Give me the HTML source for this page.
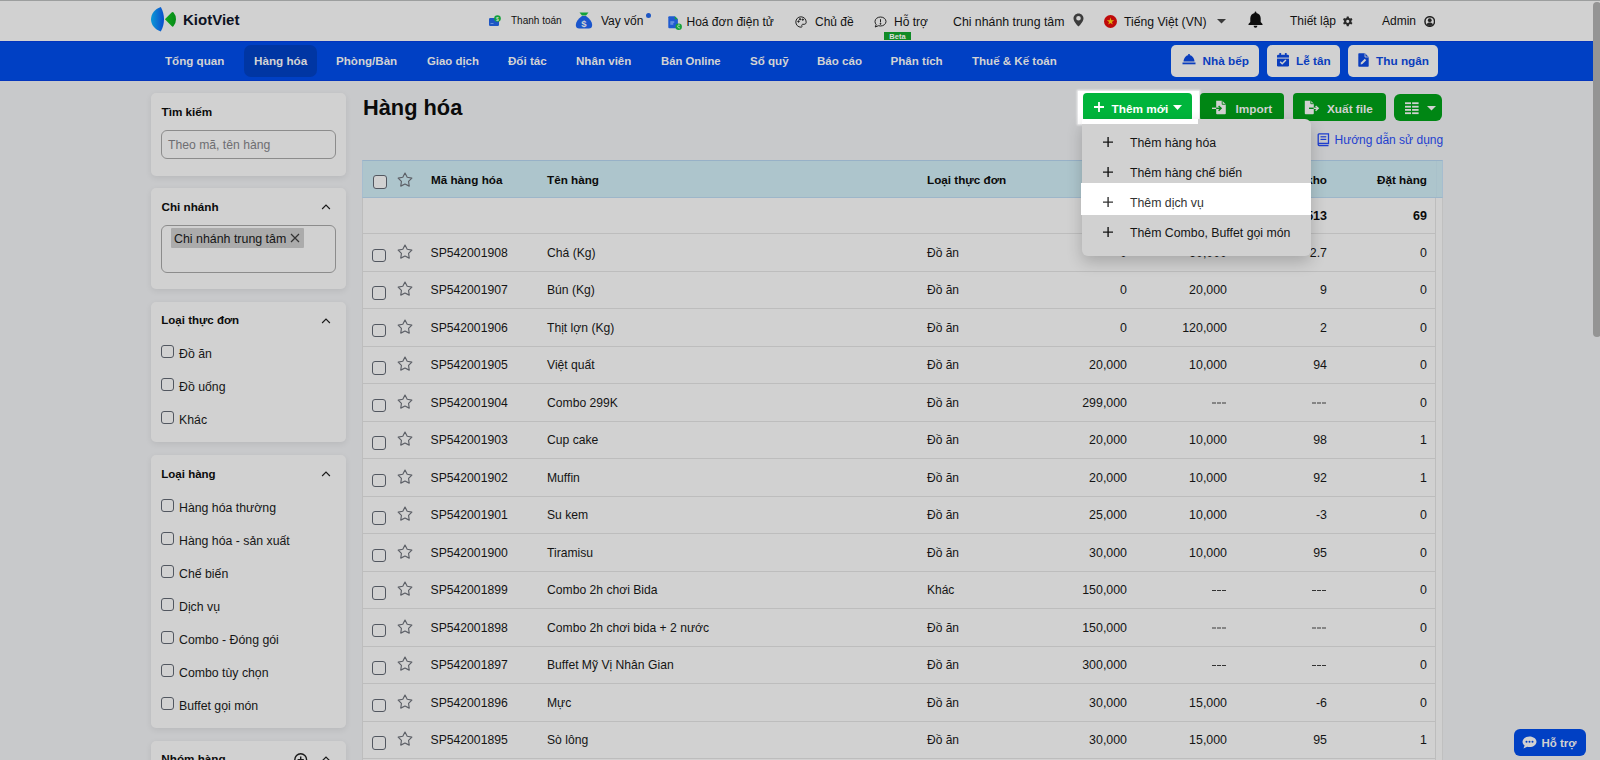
<!DOCTYPE html>
<html><head><meta charset="utf-8"><title>KiotViet - Hàng hóa</title>
<style>
html,body{margin:0;padding:0;width:1600px;height:760px;overflow:hidden;background:#c8c9cb;font-family:"Liberation Sans", sans-serif;}
.t{position:absolute;white-space:nowrap;line-height:1;font-family:"Liberation Sans", sans-serif;}
svg{display:block}
</style></head><body>
<div style="position:absolute;left:0px;top:0px;width:1600px;height:41px;background:#d1d1d1;"></div>
<div style="position:absolute;left:0px;top:0px;width:1600px;height:1px;background:#9c9e9e;"></div>
<svg style="position:absolute;left:146px;top:3px" width="36" height="33" viewBox="0 0 36 33"><defs><linearGradient id="lg" x1="0" y1="0" x2="1" y2="0"><stop offset="0" stop-color="#0b98d6"/><stop offset="1" stop-color="#0a4ccc"/></linearGradient><linearGradient id="lg2" x1="0" y1="0" x2="1" y2="0"><stop offset="0" stop-color="#13a81c"/><stop offset="1" stop-color="#058a18"/></linearGradient></defs><path d="M14.8 3.9 C8.5 6 5 11 5 16.3 C5 21.6 8.5 26.5 14.8 28.4 C16.8 25 18 20.8 18 16.3 C18 11.8 16.8 7.5 14.8 3.9 Z" fill="url(#lg)"/><path d="M18.9 16.3 L25.6 9.5 Q26.7 8.4 27.6 9.6 Q30 12.5 30 16.3 Q30 20 27.6 23.1 Q26.7 24.3 25.6 23.1 Z" fill="url(#lg2)"/></svg>
<div class="t" style="left:183px;top:12.00px;font-size:15px;font-weight:700;color:#0d1222;">KiotViet</div>
<svg style="position:absolute;left:489px;top:15px" width="12" height="11" viewBox="0 0 12 11"><rect x="0" y="3" width="10" height="8" rx="1.2" fill="#1d56c4"/><rect x="1.5" y="8" width="3" height="1" fill="#6b90d8"/><circle cx="8.5" cy="3.5" r="3.3" fill="#13a13a"/><text x="8.5" y="5.6" font-size="5" font-family="Liberation Sans" font-weight="700" fill="#d1d1d1" text-anchor="middle">$</text></svg>
<div class="t" style="left:511px;top:16.00px;font-size:10px;font-weight:400;color:#121212;">Thanh toán</div>
<svg style="position:absolute;left:575px;top:12px" width="18" height="17" viewBox="0 0 18 17"><path d="M4.5 0.5 H13.5 L11 3.5 H7 Z" fill="#13a13a"/><path d="M7 4 H11 C15 6.8 17.2 10 17.2 13 C17.2 15.5 15.8 16.5 13.8 16.5 H4.2 C2.2 16.5 0.8 15.5 0.8 13 C0.8 10 3 6.8 7 4 Z" fill="#1a55cc"/><text x="9" y="14.6" font-size="9.5" font-family="Liberation Sans" font-weight="700" fill="#d1d1d1" text-anchor="middle">$</text></svg>
<div class="t" style="left:601px;top:15.00px;font-size:12px;font-weight:400;color:#121212;">Vay vốn</div>
<div style="position:absolute;left:646px;top:12.5px;width:5px;height:5px;background:#1d56c4;border-radius:50%;"></div>
<svg style="position:absolute;left:668px;top:15.5px" width="15" height="14" viewBox="0 0 15 14"><path d="M0.3 1.2 C0.3 0.7 0.7 0.3 1.2 0.3 H6.8 L9.9 3.3 V11.3 C9.9 11.8 9.5 12.2 9 12.2 H1.2 C0.7 12.2 0.3 11.8 0.3 11.3 Z" fill="#1f5bd0"/><path d="M6.8 0.3 L9.9 3.3 H6.8 Z" fill="#17a23a"/><rect x="2.3" y="5.5" width="4" height="1.1" fill="#8fb0e8"/><rect x="2.3" y="7.4" width="3" height="1.1" fill="#8fb0e8"/><circle cx="10.7" cy="10.7" r="3.2" fill="#17a23a"/><path d="M11.8 9.3 C11 8.8 9.7 9 9.7 10.3 C9.7 11.6 11 12.2 11.9 11.8" fill="none" stroke="#bfe3c6" stroke-width="1"/></svg>
<div class="t" style="left:686.5px;top:16.00px;font-size:12px;font-weight:400;color:#121212;">Hoá đơn điện tử</div>
<svg style="position:absolute;left:795px;top:16px" width="12" height="12" viewBox="0 0 12 12" fill="none" stroke="#222" stroke-width="1"><path d="M6 0.8 C2.9 0.8 0.8 3.2 0.8 6 C0.8 8.9 3.1 11.2 6 11.2 C6.9 11.2 7.2 10.6 6.9 9.9 C6.5 9 7 8.3 7.9 8.3 H9.2 C10.4 8.3 11.2 7.4 11.2 6.2 C11.2 3.2 8.9 0.8 6 0.8 Z"/><circle cx="3.5" cy="5.5" r="0.7" fill="#222"/><circle cx="5" cy="3.3" r="0.7" fill="#222"/><circle cx="7.8" cy="3.6" r="0.7" fill="#222"/></svg>
<div class="t" style="left:815px;top:16.00px;font-size:12px;font-weight:400;color:#121212;">Chủ đề</div>
<svg style="position:absolute;left:874px;top:16px" width="13" height="12" viewBox="0 0 13 12" fill="none" stroke="#222" stroke-width="1"><path d="M6.5 1 C9.6 1 12 3 12 5.5 C12 8 9.6 10 6.5 10 C5.8 10 5.1 9.9 4.5 9.7 L1.2 11 L2.2 8.6 C1.4 7.8 1 6.7 1 5.5 C1 3 3.4 1 6.5 1 Z"/><path d="M6.5 3.2 V6.3" /><circle cx="6.5" cy="7.8" r="0.5" fill="#222"/></svg>
<div class="t" style="left:894px;top:16.00px;font-size:12px;font-weight:400;color:#121212;">Hỗ trợ</div>
<div style="position:absolute;left:884px;top:32px;width:27px;height:8px;background:#108a26;"></div>
<div class="t" style="left:897.5px;transform:translateX(-50%);top:33.00px;font-size:7.5px;font-weight:700;color:#dcdcdc;">Beta</div>
<div class="t" style="left:953px;top:16.00px;font-size:12.3px;font-weight:400;color:#121212;">Chi nhánh trung tâm</div>
<svg style="position:absolute;left:1073px;top:13px" width="11" height="14" viewBox="0 0 11 14"><path d="M5.5 0.5 C2.7 0.5 0.5 2.7 0.5 5.5 C0.5 9 5.5 13.5 5.5 13.5 C5.5 13.5 10.5 9 10.5 5.5 C10.5 2.7 8.3 0.5 5.5 0.5 Z M5.5 3 A2.3 2.3 0 1 1 5.5 7.6 A2.3 2.3 0 1 1 5.5 3 Z" fill="#3c3c3c" fill-rule="evenodd"/></svg>
<svg style="position:absolute;left:1104px;top:14.8px" width="13" height="13" viewBox="0 0 13 13"><circle cx="6.5" cy="6.5" r="6.5" fill="#bf0a0a"/><path d="M6.5 2.6 L7.4 5.3 H10.2 L7.9 6.9 L8.8 9.6 L6.5 8 L4.2 9.6 L5.1 6.9 L2.8 5.3 H5.6 Z" fill="#dcb010"/></svg>
<div class="t" style="left:1124px;top:16.00px;font-size:12.2px;font-weight:400;color:#121212;">Tiếng Việt (VN)</div>
<svg style="position:absolute;left:1217px;top:19px" width="9" height="5" viewBox="0 0 9 5"><path d="M0 0 H9 L4.5 4.5 Z" fill="#3a3a3a"/></svg>
<svg style="position:absolute;left:1248px;top:11px" width="15" height="17" viewBox="0 0 15 17"><path d="M7.5 0.5 C7 0.5 6.6 0.9 6.6 1.4 V2 C4 2.5 2.3 4.7 2.3 7.3 V11 L0.5 13 V14 H14.5 V13 L12.7 11 V7.3 C12.7 4.7 11 2.5 8.4 2 V1.4 C8.4 0.9 8 0.5 7.5 0.5 Z" fill="#0d0d0d"/><path d="M5.6 14.8 A1.9 1.9 0 0 0 9.4 14.8 Z" fill="#0d0d0d"/></svg>
<div class="t" style="left:1290px;top:15.00px;font-size:12px;font-weight:400;color:#121212;">Thiết lập</div>
<svg style="position:absolute;left:1341.5px;top:16px" width="11.5" height="11.5" viewBox="0 0 11 11"><path fill="#2a2a2a" fill-rule="evenodd" d="M4.6 0.3 H6.4 L6.7 1.7 C7.1 1.85 7.5 2.05 7.8 2.3 L9.1 1.8 L10 3.35 L8.95 4.3 C9 4.7 9 5.1 8.95 5.5 L10 6.45 L9.1 8 L7.8 7.5 C7.5 7.75 7.1 7.95 6.7 8.1 L6.4 9.5 H4.6 L4.3 8.1 C3.9 7.95 3.5 7.75 3.2 7.5 L1.9 8 L1 6.45 L2.05 5.5 C2 5.1 2 4.7 2.05 4.3 L1 3.35 L1.9 1.8 L3.2 2.3 C3.5 2.05 3.9 1.85 4.3 1.7 Z M5.5 3.4 A1.5 1.5 0 1 0 5.5 6.4 A1.5 1.5 0 1 0 5.5 3.4 Z" transform="translate(0,0.2)"/></svg>
<div class="t" style="left:1382px;top:15.00px;font-size:12px;font-weight:400;color:#121212;">Admin</div>
<svg style="position:absolute;left:1423.5px;top:15.5px" width="11.5" height="11" viewBox="0 0 11 11"><circle cx="5.5" cy="5.5" r="4.8" fill="none" stroke="#222" stroke-width="1.5"/><circle cx="5.5" cy="4.2" r="1.9" fill="#222"/><path d="M2.3 8.6 C3 7.2 4.1 6.6 5.5 6.6 C6.9 6.6 8 7.2 8.7 8.6 C7.9 9.5 6.8 10 5.5 10 C4.2 10 3.1 9.5 2.3 8.6 Z" fill="#2a2a2a"/></svg>
<div style="position:absolute;left:0px;top:41px;width:1600px;height:40px;background:#0040c4;"></div>
<div style="position:absolute;left:0px;top:41px;width:1600px;height:1px;background:#0434bd;"></div>
<div style="position:absolute;left:0px;top:80px;width:1600px;height:1px;background:#0436bd;"></div>
<div style="position:absolute;left:244px;top:45px;width:73px;height:32px;background:#0036a3;border-radius:7px;"></div>
<div class="t" style="left:165px;top:55.00px;font-size:11.6px;font-weight:700;color:#d3d3d3;">Tổng quan</div>
<div class="t" style="left:254px;top:55.00px;font-size:11.7px;font-weight:700;color:#d3d3d3;">Hàng hóa</div>
<div class="t" style="left:336px;top:55.00px;font-size:11.6px;font-weight:700;color:#d3d3d3;">Phòng/Bàn</div>
<div class="t" style="left:427px;top:56.00px;font-size:11.4px;font-weight:700;color:#d3d3d3;">Giao dịch</div>
<div class="t" style="left:508px;top:55.00px;font-size:11.6px;font-weight:700;color:#d3d3d3;">Đối tác</div>
<div class="t" style="left:576px;top:55.00px;font-size:11.6px;font-weight:700;color:#d3d3d3;">Nhân viên</div>
<div class="t" style="left:661px;top:56.00px;font-size:11.3px;font-weight:700;color:#d3d3d3;">Bán Online</div>
<div class="t" style="left:750px;top:55.00px;font-size:11.6px;font-weight:700;color:#d3d3d3;">Sổ quỹ</div>
<div class="t" style="left:817px;top:55.00px;font-size:11.6px;font-weight:700;color:#d3d3d3;">Báo cáo</div>
<div class="t" style="left:890.5px;top:55.00px;font-size:11.6px;font-weight:700;color:#d3d3d3;">Phân tích</div>
<div class="t" style="left:972px;top:56.00px;font-size:11.55px;font-weight:700;color:#d3d3d3;">Thuế &amp; Kế toán</div>
<div style="position:absolute;left:1171px;top:45px;width:88px;height:32px;background:#d1d1d1;border-radius:5px;"></div>
<div style="position:absolute;left:1267px;top:45px;width:73px;height:32px;background:#d1d1d1;border-radius:5px;"></div>
<div style="position:absolute;left:1348px;top:45px;width:90px;height:32px;background:#d1d1d1;border-radius:5px;"></div>
<svg style="position:absolute;left:1182px;top:54px" width="14" height="11" viewBox="0 0 14 11"><path d="M7 1 C4 1 1.8 4 1.5 7.5 H12.5 C12.2 4 10 1 7 1 Z" fill="#0a3dbd"/><rect x="0.5" y="8.5" width="13" height="1.8" fill="#0a3dbd"/><rect x="6.2" y="0" width="1.6" height="1.5" fill="#0a3dbd"/></svg>
<div class="t" style="left:1202.5px;top:56.00px;font-size:11.8px;font-weight:700;color:#0a3dbd;">Nhà bếp</div>
<svg style="position:absolute;left:1277px;top:53px" width="12" height="14" viewBox="0 0 12 14"><rect x="0" y="1.8" width="12" height="11.7" rx="1.2" fill="#0a3dbd"/><rect x="0" y="4.6" width="12" height="1" fill="#d1d1d1"/><rect x="2.3" y="0" width="1.8" height="3" rx="0.5" fill="#0a3dbd"/><rect x="7.9" y="0" width="1.8" height="3" rx="0.5" fill="#0a3dbd"/><path d="M3.2 8.8 L5.2 10.7 L8.9 7" fill="none" stroke="#d1d1d1" stroke-width="1.5"/></svg>
<div class="t" style="left:1296px;top:56.00px;font-size:11.8px;font-weight:700;color:#0a3dbd;">Lễ tân</div>
<svg style="position:absolute;left:1358px;top:53px" width="11" height="14" viewBox="0 0 11 14"><path fill="#0a3dbd" d="M1 0.3 H7 L10.7 4 V13 C10.7 13.4 10.4 13.7 10 13.7 H1 C0.6 13.7 0.3 13.4 0.3 13 V1 C0.3 0.6 0.6 0.3 1 0.3 Z"/><path d="M7 0.3 V4 H10.7" fill="none" stroke="#d1d1d1" stroke-width="0.8"/><path d="M2.6 11.4 L3 9.6 L6.8 5.8 L8.2 7.2 L4.4 11 Z" fill="#d1d1d1"/></svg>
<div class="t" style="left:1376px;top:56.00px;font-size:11.8px;font-weight:700;color:#0a3dbd;">Thu ngân</div>
<div style="position:absolute;left:0px;top:81px;width:1600px;height:679px;background:#c8c9cb;"></div>
<div style="position:absolute;left:151px;top:93px;width:195px;height:83px;background:#d1d1d1;border-radius:5px;box-shadow:0 2px 6px rgba(0,0,0,0.08);"></div>
<div class="t" style="left:161.5px;top:106.00px;font-size:11.7px;font-weight:700;color:#0b0b0b;">Tìm kiếm</div>
<div style="position:absolute;left:161px;top:130px;width:175px;height:29px;box-sizing:border-box;border:1px solid #8c8c8c;border-radius:6px;"></div>
<div class="t" style="left:168px;top:139.00px;font-size:12.2px;font-weight:400;color:#6e6e72;">Theo mã, tên hàng</div>
<div style="position:absolute;left:151px;top:188px;width:195px;height:101px;background:#d1d1d1;border-radius:5px;box-shadow:0 2px 6px rgba(0,0,0,0.08);"></div>
<div class="t" style="left:161.5px;top:201.00px;font-size:11.7px;font-weight:700;color:#0b0b0b;">Chi nhánh</div>
<svg style="position:absolute;left:320.5px;top:204px" width="10" height="6" viewBox="0 0 10 6"><path d="M1.1 5 L5 1.1 L8.9 5" fill="none" stroke="#1a1a1a" stroke-width="1.15"/></svg>
<div style="position:absolute;left:161px;top:225px;width:175px;height:48px;box-sizing:border-box;border:1px solid #8c8c8c;border-radius:6px;"></div>
<div style="position:absolute;left:171px;top:228px;width:133px;height:20px;background:#ababab;border-radius:1px;"></div>
<div class="t" style="left:174px;top:233.00px;font-size:12.4px;font-weight:400;color:#161616;">Chi nhánh trung tâm</div>
<svg style="position:absolute;left:290px;top:233px" width="10" height="10" viewBox="0 0 10 10"><path d="M1 1 L9 9 M9 1 L1 9" stroke="#333" stroke-width="1.2"/></svg>
<div style="position:absolute;left:151px;top:302px;width:195px;height:140px;background:#d1d1d1;border-radius:5px;box-shadow:0 2px 6px rgba(0,0,0,0.08);"></div>
<div class="t" style="left:161.3px;top:315.00px;font-size:11.5px;font-weight:700;color:#0b0b0b;">Loại thực đơn</div>
<svg style="position:absolute;left:320.5px;top:317.5px" width="10" height="6" viewBox="0 0 10 6"><path d="M1.1 5 L5 1.1 L8.9 5" fill="none" stroke="#1a1a1a" stroke-width="1.15"/></svg>
<div style="position:absolute;left:161px;top:345px;width:13px;height:13px;box-sizing:border-box;border:1px solid #525760;border-radius:3px;background:transparent;"></div>
<div class="t" style="left:179px;top:348.00px;font-size:12.3px;font-weight:400;color:#161616;">Đồ ăn</div>
<div style="position:absolute;left:161px;top:378px;width:13px;height:13px;box-sizing:border-box;border:1px solid #525760;border-radius:3px;background:transparent;"></div>
<div class="t" style="left:179px;top:381.00px;font-size:12.3px;font-weight:400;color:#161616;">Đồ uống</div>
<div style="position:absolute;left:161px;top:411px;width:13px;height:13px;box-sizing:border-box;border:1px solid #525760;border-radius:3px;background:transparent;"></div>
<div class="t" style="left:179px;top:414.00px;font-size:12.3px;font-weight:400;color:#161616;">Khác</div>
<div style="position:absolute;left:151px;top:455px;width:195px;height:273px;background:#d1d1d1;border-radius:5px;box-shadow:0 2px 6px rgba(0,0,0,0.08);"></div>
<div class="t" style="left:161.3px;top:469.00px;font-size:11.5px;font-weight:700;color:#0b0b0b;">Loại hàng</div>
<svg style="position:absolute;left:320.5px;top:471px" width="10" height="6" viewBox="0 0 10 6"><path d="M1.1 5 L5 1.1 L8.9 5" fill="none" stroke="#1a1a1a" stroke-width="1.15"/></svg>
<div style="position:absolute;left:161px;top:498.6px;width:13px;height:13px;box-sizing:border-box;border:1px solid #525760;border-radius:3px;background:transparent;"></div>
<div class="t" style="left:179px;top:502.00px;font-size:12.3px;font-weight:400;color:#161616;">Hàng hóa thường</div>
<div style="position:absolute;left:161px;top:531.62px;width:13px;height:13px;box-sizing:border-box;border:1px solid #525760;border-radius:3px;background:transparent;"></div>
<div class="t" style="left:179px;top:535.00px;font-size:12.3px;font-weight:400;color:#161616;">Hàng hóa - sản xuất</div>
<div style="position:absolute;left:161px;top:564.64px;width:13px;height:13px;box-sizing:border-box;border:1px solid #525760;border-radius:3px;background:transparent;"></div>
<div class="t" style="left:179px;top:568.00px;font-size:12.3px;font-weight:400;color:#161616;">Chế biến</div>
<div style="position:absolute;left:161px;top:597.6600000000001px;width:13px;height:13px;box-sizing:border-box;border:1px solid #525760;border-radius:3px;background:transparent;"></div>
<div class="t" style="left:179px;top:601.00px;font-size:12.3px;font-weight:400;color:#161616;">Dịch vụ</div>
<div style="position:absolute;left:161px;top:630.6800000000001px;width:13px;height:13px;box-sizing:border-box;border:1px solid #525760;border-radius:3px;background:transparent;"></div>
<div class="t" style="left:179px;top:634.00px;font-size:12.3px;font-weight:400;color:#161616;">Combo - Đóng gói</div>
<div style="position:absolute;left:161px;top:663.7px;width:13px;height:13px;box-sizing:border-box;border:1px solid #525760;border-radius:3px;background:transparent;"></div>
<div class="t" style="left:179px;top:667.00px;font-size:12.3px;font-weight:400;color:#161616;">Combo tùy chọn</div>
<div style="position:absolute;left:161px;top:696.72px;width:13px;height:13px;box-sizing:border-box;border:1px solid #525760;border-radius:3px;background:transparent;"></div>
<div class="t" style="left:179px;top:700.00px;font-size:12.3px;font-weight:400;color:#161616;">Buffet gọi món</div>
<div style="position:absolute;left:151px;top:741px;width:195px;height:60px;background:#d1d1d1;border-radius:5px;box-shadow:0 2px 6px rgba(0,0,0,0.08);"></div>
<div class="t" style="left:161.3px;top:753.00px;font-size:11.7px;font-weight:700;color:#0b0b0b;">Nhóm hàng</div>
<svg style="position:absolute;left:293.5px;top:752.5px" width="14" height="14" viewBox="0 0 14 14"><circle cx="6.7" cy="6.7" r="5.9" fill="none" stroke="#1a1a1a" stroke-width="1.4"/><path d="M6.7 3.6 V9.8 M3.6 6.7 H9.8" stroke="#1a1a1a" stroke-width="1.4"/></svg>
<svg style="position:absolute;left:320.5px;top:756px" width="10" height="6" viewBox="0 0 10 6"><path d="M1.1 5 L5 1.1 L8.9 5" fill="none" stroke="#1a1a1a" stroke-width="1.15"/></svg>
<div class="t" style="left:363px;top:97.00px;font-size:21.8px;font-weight:700;color:#0b0b0b;">Hàng hóa</div>
<div style="position:absolute;left:362px;top:160px;width:1081px;height:38px;background:#adc5cc;box-sizing:border-box;border:1px solid #a6bdcf;border-top-color:#97b1c7;border-bottom-color:#9db6c9;"></div>
<div style="position:absolute;left:1436px;top:161px;width:1px;height:36px;background:#a9c1ca;"></div>
<div style="position:absolute;left:362px;top:198px;width:1073px;height:600px;background:#d1d1d1;"></div>
<div style="position:absolute;left:1435px;top:198px;width:8px;height:600px;background:#d0d0d0;box-sizing:border-box;border-left:1px solid #bdbdbd;border-right:1px solid #c0c0c0;"></div>
<div style="position:absolute;left:362px;top:198px;width:1px;height:600px;background:#bdbdbd;"></div>
<div style="position:absolute;left:373px;top:175px;width:13.5px;height:13.5px;box-sizing:border-box;border:1px solid #525760;border-radius:3px;background:#d1d1d1;"></div>
<svg style="position:absolute;left:396.8px;top:171.6px" width="16" height="16" viewBox="0 0 16 16"><path d="M8.00 1.10 L10.20 5.27 L14.85 6.08 L11.57 9.46 L12.23 14.12 L8.00 12.05 L3.77 14.12 L4.43 9.46 L1.15 6.08 L5.80 5.27 Z" fill="none" stroke="#5c5f66" stroke-width="1.15" stroke-linejoin="round"/></svg>
<div class="t" style="left:431px;top:174.00px;font-size:11.7px;font-weight:700;color:#0b0b0b;">Mã hàng hóa</div>
<div class="t" style="left:547px;top:174.00px;font-size:11.7px;font-weight:700;color:#0b0b0b;">Tên hàng</div>
<div class="t" style="left:927px;top:174.00px;font-size:11.7px;font-weight:700;color:#0b0b0b;">Loại thực đơn</div>
<div class="t" style="right:473px;top:174.00px;font-size:11.7px;font-weight:700;color:#0b0b0b;">Giá bán</div>
<div class="t" style="right:373px;top:174.00px;font-size:11.7px;font-weight:700;color:#0b0b0b;">Giá vốn</div>
<div class="t" style="right:273px;top:174.00px;font-size:11.7px;font-weight:700;color:#0b0b0b;">Tồn kho</div>
<div class="t" style="right:173px;top:174.00px;font-size:11.7px;font-weight:700;color:#0b0b0b;">Đặt hàng</div>
<div style="position:absolute;left:362px;top:233px;width:1073px;height:1px;background:#bdbdbd;"></div>
<div class="t" style="right:273px;top:210.00px;font-size:12.5px;font-weight:700;color:#0b0b0b;">513</div>
<div class="t" style="right:173px;top:210.00px;font-size:12.5px;font-weight:700;color:#0b0b0b;">69</div>
<div style="position:absolute;left:362px;top:271px;width:1073px;height:1px;background:#bdbdbd;"></div>
<div style="position:absolute;left:372.4px;top:248.9px;width:13.5px;height:13.5px;box-sizing:border-box;border:1px solid #525760;border-radius:3px;background:transparent;"></div>
<svg style="position:absolute;left:396.8px;top:243.9px" width="16" height="16" viewBox="0 0 16 16"><path d="M8.00 1.10 L10.20 5.27 L14.85 6.08 L11.57 9.46 L12.23 14.12 L8.00 12.05 L3.77 14.12 L4.43 9.46 L1.15 6.08 L5.80 5.27 Z" fill="none" stroke="#5c5f66" stroke-width="1.15" stroke-linejoin="round"/></svg>
<div class="t" style="left:430.5px;top:247.00px;font-size:12.2px;font-weight:400;color:#141414;">SP542001908</div>
<div class="t" style="left:547px;top:247.00px;font-size:12.15px;font-weight:400;color:#141414;">Chá (Kg)</div>
<div class="t" style="left:927px;top:247.00px;font-size:12px;font-weight:400;color:#141414;">Đồ ăn</div>
<div class="t" style="right:473px;top:247.00px;font-size:12.4px;font-weight:400;color:#141414;">0</div>
<div class="t" style="right:373px;top:247.00px;font-size:12.4px;font-weight:400;color:#141414;">60,000</div>
<div class="t" style="right:273px;top:247.00px;font-size:12.4px;font-weight:400;color:#141414;">2.7</div>
<div class="t" style="right:173px;top:247.00px;font-size:12.4px;font-weight:400;color:#141414;">0</div>
<div style="position:absolute;left:362px;top:308px;width:1073px;height:1px;background:#bdbdbd;"></div>
<div style="position:absolute;left:372.4px;top:286.4px;width:13.5px;height:13.5px;box-sizing:border-box;border:1px solid #525760;border-radius:3px;background:transparent;"></div>
<svg style="position:absolute;left:396.8px;top:281.4px" width="16" height="16" viewBox="0 0 16 16"><path d="M8.00 1.10 L10.20 5.27 L14.85 6.08 L11.57 9.46 L12.23 14.12 L8.00 12.05 L3.77 14.12 L4.43 9.46 L1.15 6.08 L5.80 5.27 Z" fill="none" stroke="#5c5f66" stroke-width="1.15" stroke-linejoin="round"/></svg>
<div class="t" style="left:430.5px;top:284.00px;font-size:12.2px;font-weight:400;color:#141414;">SP542001907</div>
<div class="t" style="left:547px;top:284.00px;font-size:12.15px;font-weight:400;color:#141414;">Bún (Kg)</div>
<div class="t" style="left:927px;top:284.00px;font-size:12px;font-weight:400;color:#141414;">Đồ ăn</div>
<div class="t" style="right:473px;top:284.00px;font-size:12.4px;font-weight:400;color:#141414;">0</div>
<div class="t" style="right:373px;top:284.00px;font-size:12.4px;font-weight:400;color:#141414;">20,000</div>
<div class="t" style="right:273px;top:284.00px;font-size:12.4px;font-weight:400;color:#141414;">9</div>
<div class="t" style="right:173px;top:284.00px;font-size:12.4px;font-weight:400;color:#141414;">0</div>
<div style="position:absolute;left:362px;top:346px;width:1073px;height:1px;background:#bdbdbd;"></div>
<div style="position:absolute;left:372.4px;top:323.9px;width:13.5px;height:13.5px;box-sizing:border-box;border:1px solid #525760;border-radius:3px;background:transparent;"></div>
<svg style="position:absolute;left:396.8px;top:318.9px" width="16" height="16" viewBox="0 0 16 16"><path d="M8.00 1.10 L10.20 5.27 L14.85 6.08 L11.57 9.46 L12.23 14.12 L8.00 12.05 L3.77 14.12 L4.43 9.46 L1.15 6.08 L5.80 5.27 Z" fill="none" stroke="#5c5f66" stroke-width="1.15" stroke-linejoin="round"/></svg>
<div class="t" style="left:430.5px;top:322.00px;font-size:12.2px;font-weight:400;color:#141414;">SP542001906</div>
<div class="t" style="left:547px;top:322.00px;font-size:12.15px;font-weight:400;color:#141414;">Thịt lợn (Kg)</div>
<div class="t" style="left:927px;top:322.00px;font-size:12px;font-weight:400;color:#141414;">Đồ ăn</div>
<div class="t" style="right:473px;top:322.00px;font-size:12.4px;font-weight:400;color:#141414;">0</div>
<div class="t" style="right:373px;top:322.00px;font-size:12.4px;font-weight:400;color:#141414;">120,000</div>
<div class="t" style="right:273px;top:322.00px;font-size:12.4px;font-weight:400;color:#141414;">2</div>
<div class="t" style="right:173px;top:322.00px;font-size:12.4px;font-weight:400;color:#141414;">0</div>
<div style="position:absolute;left:362px;top:383px;width:1073px;height:1px;background:#bdbdbd;"></div>
<div style="position:absolute;left:372.4px;top:361.4px;width:13.5px;height:13.5px;box-sizing:border-box;border:1px solid #525760;border-radius:3px;background:transparent;"></div>
<svg style="position:absolute;left:396.8px;top:356.4px" width="16" height="16" viewBox="0 0 16 16"><path d="M8.00 1.10 L10.20 5.27 L14.85 6.08 L11.57 9.46 L12.23 14.12 L8.00 12.05 L3.77 14.12 L4.43 9.46 L1.15 6.08 L5.80 5.27 Z" fill="none" stroke="#5c5f66" stroke-width="1.15" stroke-linejoin="round"/></svg>
<div class="t" style="left:430.5px;top:359.00px;font-size:12.2px;font-weight:400;color:#141414;">SP542001905</div>
<div class="t" style="left:547px;top:359.00px;font-size:12.15px;font-weight:400;color:#141414;">Việt quất</div>
<div class="t" style="left:927px;top:359.00px;font-size:12px;font-weight:400;color:#141414;">Đồ ăn</div>
<div class="t" style="right:473px;top:359.00px;font-size:12.4px;font-weight:400;color:#141414;">20,000</div>
<div class="t" style="right:373px;top:359.00px;font-size:12.4px;font-weight:400;color:#141414;">10,000</div>
<div class="t" style="right:273px;top:359.00px;font-size:12.4px;font-weight:400;color:#141414;">94</div>
<div class="t" style="right:173px;top:359.00px;font-size:12.4px;font-weight:400;color:#141414;">0</div>
<div style="position:absolute;left:362px;top:421px;width:1073px;height:1px;background:#bdbdbd;"></div>
<div style="position:absolute;left:372.4px;top:398.9px;width:13.5px;height:13.5px;box-sizing:border-box;border:1px solid #525760;border-radius:3px;background:transparent;"></div>
<svg style="position:absolute;left:396.8px;top:393.9px" width="16" height="16" viewBox="0 0 16 16"><path d="M8.00 1.10 L10.20 5.27 L14.85 6.08 L11.57 9.46 L12.23 14.12 L8.00 12.05 L3.77 14.12 L4.43 9.46 L1.15 6.08 L5.80 5.27 Z" fill="none" stroke="#5c5f66" stroke-width="1.15" stroke-linejoin="round"/></svg>
<div class="t" style="left:430.5px;top:397.00px;font-size:12.2px;font-weight:400;color:#141414;">SP542001904</div>
<div class="t" style="left:547px;top:397.00px;font-size:12.15px;font-weight:400;color:#141414;">Combo 299K</div>
<div class="t" style="left:927px;top:397.00px;font-size:12px;font-weight:400;color:#141414;">Đồ ăn</div>
<div class="t" style="right:473px;top:397.00px;font-size:12.4px;font-weight:400;color:#141414;">299,000</div>
<div style="position:absolute;left:1211.6px;top:402.2px;width:4.2px;height:1.5px;background:#858585;"></div>
<div style="position:absolute;left:1216.8px;top:402.2px;width:4.2px;height:1.5px;background:#858585;"></div>
<div style="position:absolute;left:1222.0px;top:402.2px;width:4.2px;height:1.5px;background:#858585;"></div>
<div style="position:absolute;left:1311.6px;top:402.2px;width:4.2px;height:1.5px;background:#858585;"></div>
<div style="position:absolute;left:1316.8px;top:402.2px;width:4.2px;height:1.5px;background:#858585;"></div>
<div style="position:absolute;left:1322.0px;top:402.2px;width:4.2px;height:1.5px;background:#858585;"></div>
<div class="t" style="right:173px;top:397.00px;font-size:12.4px;font-weight:400;color:#141414;">0</div>
<div style="position:absolute;left:362px;top:458px;width:1073px;height:1px;background:#bdbdbd;"></div>
<div style="position:absolute;left:372.4px;top:436.4px;width:13.5px;height:13.5px;box-sizing:border-box;border:1px solid #525760;border-radius:3px;background:transparent;"></div>
<svg style="position:absolute;left:396.8px;top:431.4px" width="16" height="16" viewBox="0 0 16 16"><path d="M8.00 1.10 L10.20 5.27 L14.85 6.08 L11.57 9.46 L12.23 14.12 L8.00 12.05 L3.77 14.12 L4.43 9.46 L1.15 6.08 L5.80 5.27 Z" fill="none" stroke="#5c5f66" stroke-width="1.15" stroke-linejoin="round"/></svg>
<div class="t" style="left:430.5px;top:434.00px;font-size:12.2px;font-weight:400;color:#141414;">SP542001903</div>
<div class="t" style="left:547px;top:434.00px;font-size:12.15px;font-weight:400;color:#141414;">Cup cake</div>
<div class="t" style="left:927px;top:434.00px;font-size:12px;font-weight:400;color:#141414;">Đồ ăn</div>
<div class="t" style="right:473px;top:434.00px;font-size:12.4px;font-weight:400;color:#141414;">20,000</div>
<div class="t" style="right:373px;top:434.00px;font-size:12.4px;font-weight:400;color:#141414;">10,000</div>
<div class="t" style="right:273px;top:434.00px;font-size:12.4px;font-weight:400;color:#141414;">98</div>
<div class="t" style="right:173px;top:434.00px;font-size:12.4px;font-weight:400;color:#141414;">1</div>
<div style="position:absolute;left:362px;top:496px;width:1073px;height:1px;background:#bdbdbd;"></div>
<div style="position:absolute;left:372.4px;top:473.9px;width:13.5px;height:13.5px;box-sizing:border-box;border:1px solid #525760;border-radius:3px;background:transparent;"></div>
<svg style="position:absolute;left:396.8px;top:468.9px" width="16" height="16" viewBox="0 0 16 16"><path d="M8.00 1.10 L10.20 5.27 L14.85 6.08 L11.57 9.46 L12.23 14.12 L8.00 12.05 L3.77 14.12 L4.43 9.46 L1.15 6.08 L5.80 5.27 Z" fill="none" stroke="#5c5f66" stroke-width="1.15" stroke-linejoin="round"/></svg>
<div class="t" style="left:430.5px;top:472.00px;font-size:12.2px;font-weight:400;color:#141414;">SP542001902</div>
<div class="t" style="left:547px;top:472.00px;font-size:12.15px;font-weight:400;color:#141414;">Muffin</div>
<div class="t" style="left:927px;top:472.00px;font-size:12px;font-weight:400;color:#141414;">Đồ ăn</div>
<div class="t" style="right:473px;top:472.00px;font-size:12.4px;font-weight:400;color:#141414;">20,000</div>
<div class="t" style="right:373px;top:472.00px;font-size:12.4px;font-weight:400;color:#141414;">10,000</div>
<div class="t" style="right:273px;top:472.00px;font-size:12.4px;font-weight:400;color:#141414;">92</div>
<div class="t" style="right:173px;top:472.00px;font-size:12.4px;font-weight:400;color:#141414;">1</div>
<div style="position:absolute;left:362px;top:533px;width:1073px;height:1px;background:#bdbdbd;"></div>
<div style="position:absolute;left:372.4px;top:511.4px;width:13.5px;height:13.5px;box-sizing:border-box;border:1px solid #525760;border-radius:3px;background:transparent;"></div>
<svg style="position:absolute;left:396.8px;top:506.4px" width="16" height="16" viewBox="0 0 16 16"><path d="M8.00 1.10 L10.20 5.27 L14.85 6.08 L11.57 9.46 L12.23 14.12 L8.00 12.05 L3.77 14.12 L4.43 9.46 L1.15 6.08 L5.80 5.27 Z" fill="none" stroke="#5c5f66" stroke-width="1.15" stroke-linejoin="round"/></svg>
<div class="t" style="left:430.5px;top:509.00px;font-size:12.2px;font-weight:400;color:#141414;">SP542001901</div>
<div class="t" style="left:547px;top:509.00px;font-size:12.15px;font-weight:400;color:#141414;">Su kem</div>
<div class="t" style="left:927px;top:509.00px;font-size:12px;font-weight:400;color:#141414;">Đồ ăn</div>
<div class="t" style="right:473px;top:509.00px;font-size:12.4px;font-weight:400;color:#141414;">25,000</div>
<div class="t" style="right:373px;top:509.00px;font-size:12.4px;font-weight:400;color:#141414;">10,000</div>
<div class="t" style="right:273px;top:509.00px;font-size:12.4px;font-weight:400;color:#141414;">-3</div>
<div class="t" style="right:173px;top:509.00px;font-size:12.4px;font-weight:400;color:#141414;">0</div>
<div style="position:absolute;left:362px;top:571px;width:1073px;height:1px;background:#bdbdbd;"></div>
<div style="position:absolute;left:372.4px;top:548.9px;width:13.5px;height:13.5px;box-sizing:border-box;border:1px solid #525760;border-radius:3px;background:transparent;"></div>
<svg style="position:absolute;left:396.8px;top:543.9px" width="16" height="16" viewBox="0 0 16 16"><path d="M8.00 1.10 L10.20 5.27 L14.85 6.08 L11.57 9.46 L12.23 14.12 L8.00 12.05 L3.77 14.12 L4.43 9.46 L1.15 6.08 L5.80 5.27 Z" fill="none" stroke="#5c5f66" stroke-width="1.15" stroke-linejoin="round"/></svg>
<div class="t" style="left:430.5px;top:547.00px;font-size:12.2px;font-weight:400;color:#141414;">SP542001900</div>
<div class="t" style="left:547px;top:547.00px;font-size:12.15px;font-weight:400;color:#141414;">Tiramisu</div>
<div class="t" style="left:927px;top:547.00px;font-size:12px;font-weight:400;color:#141414;">Đồ ăn</div>
<div class="t" style="right:473px;top:547.00px;font-size:12.4px;font-weight:400;color:#141414;">30,000</div>
<div class="t" style="right:373px;top:547.00px;font-size:12.4px;font-weight:400;color:#141414;">10,000</div>
<div class="t" style="right:273px;top:547.00px;font-size:12.4px;font-weight:400;color:#141414;">95</div>
<div class="t" style="right:173px;top:547.00px;font-size:12.4px;font-weight:400;color:#141414;">0</div>
<div style="position:absolute;left:362px;top:608px;width:1073px;height:1px;background:#bdbdbd;"></div>
<div style="position:absolute;left:372.4px;top:586.4px;width:13.5px;height:13.5px;box-sizing:border-box;border:1px solid #525760;border-radius:3px;background:transparent;"></div>
<svg style="position:absolute;left:396.8px;top:581.4px" width="16" height="16" viewBox="0 0 16 16"><path d="M8.00 1.10 L10.20 5.27 L14.85 6.08 L11.57 9.46 L12.23 14.12 L8.00 12.05 L3.77 14.12 L4.43 9.46 L1.15 6.08 L5.80 5.27 Z" fill="none" stroke="#5c5f66" stroke-width="1.15" stroke-linejoin="round"/></svg>
<div class="t" style="left:430.5px;top:584.00px;font-size:12.2px;font-weight:400;color:#141414;">SP542001899</div>
<div class="t" style="left:547px;top:584.00px;font-size:12.15px;font-weight:400;color:#141414;">Combo 2h chơi Bida</div>
<div class="t" style="left:927px;top:584.00px;font-size:12px;font-weight:400;color:#141414;">Khác</div>
<div class="t" style="right:473px;top:584.00px;font-size:12.4px;font-weight:400;color:#141414;">150,000</div>
<div style="position:absolute;left:1211.6px;top:589.7px;width:4.2px;height:1.5px;background:#333333;"></div>
<div style="position:absolute;left:1216.8px;top:589.7px;width:4.2px;height:1.5px;background:#333333;"></div>
<div style="position:absolute;left:1222.0px;top:589.7px;width:4.2px;height:1.5px;background:#333333;"></div>
<div style="position:absolute;left:1311.6px;top:589.7px;width:4.2px;height:1.5px;background:#333333;"></div>
<div style="position:absolute;left:1316.8px;top:589.7px;width:4.2px;height:1.5px;background:#333333;"></div>
<div style="position:absolute;left:1322.0px;top:589.7px;width:4.2px;height:1.5px;background:#333333;"></div>
<div class="t" style="right:173px;top:584.00px;font-size:12.4px;font-weight:400;color:#141414;">0</div>
<div style="position:absolute;left:362px;top:646px;width:1073px;height:1px;background:#bdbdbd;"></div>
<div style="position:absolute;left:372.4px;top:623.9px;width:13.5px;height:13.5px;box-sizing:border-box;border:1px solid #525760;border-radius:3px;background:transparent;"></div>
<svg style="position:absolute;left:396.8px;top:618.9px" width="16" height="16" viewBox="0 0 16 16"><path d="M8.00 1.10 L10.20 5.27 L14.85 6.08 L11.57 9.46 L12.23 14.12 L8.00 12.05 L3.77 14.12 L4.43 9.46 L1.15 6.08 L5.80 5.27 Z" fill="none" stroke="#5c5f66" stroke-width="1.15" stroke-linejoin="round"/></svg>
<div class="t" style="left:430.5px;top:622.00px;font-size:12.2px;font-weight:400;color:#141414;">SP542001898</div>
<div class="t" style="left:547px;top:622.00px;font-size:12.15px;font-weight:400;color:#141414;">Combo 2h chơi bida + 2 nước</div>
<div class="t" style="left:927px;top:622.00px;font-size:12px;font-weight:400;color:#141414;">Đồ ăn</div>
<div class="t" style="right:473px;top:622.00px;font-size:12.4px;font-weight:400;color:#141414;">150,000</div>
<div style="position:absolute;left:1211.6px;top:627.2px;width:4.2px;height:1.5px;background:#858585;"></div>
<div style="position:absolute;left:1216.8px;top:627.2px;width:4.2px;height:1.5px;background:#858585;"></div>
<div style="position:absolute;left:1222.0px;top:627.2px;width:4.2px;height:1.5px;background:#858585;"></div>
<div style="position:absolute;left:1311.6px;top:627.2px;width:4.2px;height:1.5px;background:#858585;"></div>
<div style="position:absolute;left:1316.8px;top:627.2px;width:4.2px;height:1.5px;background:#858585;"></div>
<div style="position:absolute;left:1322.0px;top:627.2px;width:4.2px;height:1.5px;background:#858585;"></div>
<div class="t" style="right:173px;top:622.00px;font-size:12.4px;font-weight:400;color:#141414;">0</div>
<div style="position:absolute;left:362px;top:683px;width:1073px;height:1px;background:#bdbdbd;"></div>
<div style="position:absolute;left:372.4px;top:661.4px;width:13.5px;height:13.5px;box-sizing:border-box;border:1px solid #525760;border-radius:3px;background:transparent;"></div>
<svg style="position:absolute;left:396.8px;top:656.4px" width="16" height="16" viewBox="0 0 16 16"><path d="M8.00 1.10 L10.20 5.27 L14.85 6.08 L11.57 9.46 L12.23 14.12 L8.00 12.05 L3.77 14.12 L4.43 9.46 L1.15 6.08 L5.80 5.27 Z" fill="none" stroke="#5c5f66" stroke-width="1.15" stroke-linejoin="round"/></svg>
<div class="t" style="left:430.5px;top:659.00px;font-size:12.2px;font-weight:400;color:#141414;">SP542001897</div>
<div class="t" style="left:547px;top:659.00px;font-size:12.15px;font-weight:400;color:#141414;">Buffet Mỹ Vị Nhân Gian</div>
<div class="t" style="left:927px;top:659.00px;font-size:12px;font-weight:400;color:#141414;">Đồ ăn</div>
<div class="t" style="right:473px;top:659.00px;font-size:12.4px;font-weight:400;color:#141414;">300,000</div>
<div style="position:absolute;left:1211.6px;top:664.7px;width:4.2px;height:1.5px;background:#333333;"></div>
<div style="position:absolute;left:1216.8px;top:664.7px;width:4.2px;height:1.5px;background:#333333;"></div>
<div style="position:absolute;left:1222.0px;top:664.7px;width:4.2px;height:1.5px;background:#333333;"></div>
<div style="position:absolute;left:1311.6px;top:664.7px;width:4.2px;height:1.5px;background:#333333;"></div>
<div style="position:absolute;left:1316.8px;top:664.7px;width:4.2px;height:1.5px;background:#333333;"></div>
<div style="position:absolute;left:1322.0px;top:664.7px;width:4.2px;height:1.5px;background:#333333;"></div>
<div class="t" style="right:173px;top:659.00px;font-size:12.4px;font-weight:400;color:#141414;">0</div>
<div style="position:absolute;left:362px;top:721px;width:1073px;height:1px;background:#bdbdbd;"></div>
<div style="position:absolute;left:372.4px;top:698.9px;width:13.5px;height:13.5px;box-sizing:border-box;border:1px solid #525760;border-radius:3px;background:transparent;"></div>
<svg style="position:absolute;left:396.8px;top:693.9px" width="16" height="16" viewBox="0 0 16 16"><path d="M8.00 1.10 L10.20 5.27 L14.85 6.08 L11.57 9.46 L12.23 14.12 L8.00 12.05 L3.77 14.12 L4.43 9.46 L1.15 6.08 L5.80 5.27 Z" fill="none" stroke="#5c5f66" stroke-width="1.15" stroke-linejoin="round"/></svg>
<div class="t" style="left:430.5px;top:697.00px;font-size:12.2px;font-weight:400;color:#141414;">SP542001896</div>
<div class="t" style="left:547px;top:697.00px;font-size:12.15px;font-weight:400;color:#141414;">Mực</div>
<div class="t" style="left:927px;top:697.00px;font-size:12px;font-weight:400;color:#141414;">Đồ ăn</div>
<div class="t" style="right:473px;top:697.00px;font-size:12.4px;font-weight:400;color:#141414;">30,000</div>
<div class="t" style="right:373px;top:697.00px;font-size:12.4px;font-weight:400;color:#141414;">15,000</div>
<div class="t" style="right:273px;top:697.00px;font-size:12.4px;font-weight:400;color:#141414;">-6</div>
<div class="t" style="right:173px;top:697.00px;font-size:12.4px;font-weight:400;color:#141414;">0</div>
<div style="position:absolute;left:362px;top:758px;width:1073px;height:1px;background:#bdbdbd;"></div>
<div style="position:absolute;left:372.4px;top:736.4px;width:13.5px;height:13.5px;box-sizing:border-box;border:1px solid #525760;border-radius:3px;background:transparent;"></div>
<svg style="position:absolute;left:396.8px;top:731.4px" width="16" height="16" viewBox="0 0 16 16"><path d="M8.00 1.10 L10.20 5.27 L14.85 6.08 L11.57 9.46 L12.23 14.12 L8.00 12.05 L3.77 14.12 L4.43 9.46 L1.15 6.08 L5.80 5.27 Z" fill="none" stroke="#5c5f66" stroke-width="1.15" stroke-linejoin="round"/></svg>
<div class="t" style="left:430.5px;top:734.00px;font-size:12.2px;font-weight:400;color:#141414;">SP542001895</div>
<div class="t" style="left:547px;top:734.00px;font-size:12.15px;font-weight:400;color:#141414;">Sò lông</div>
<div class="t" style="left:927px;top:734.00px;font-size:12px;font-weight:400;color:#141414;">Đồ ăn</div>
<div class="t" style="right:473px;top:734.00px;font-size:12.4px;font-weight:400;color:#141414;">30,000</div>
<div class="t" style="right:373px;top:734.00px;font-size:12.4px;font-weight:400;color:#141414;">15,000</div>
<div class="t" style="right:273px;top:734.00px;font-size:12.4px;font-weight:400;color:#141414;">95</div>
<div class="t" style="right:173px;top:734.00px;font-size:12.4px;font-weight:400;color:#141414;">1</div>
<div style="position:absolute;left:1077.5px;top:90.5px;width:121px;height:33px;background:#ffffff;box-shadow:0 0 2px 1.2px #f8f8f9;"></div>
<div style="position:absolute;left:1083px;top:93px;width:109px;height:29px;background:#00b53b;border-radius:4px;"></div>
<svg style="position:absolute;left:1093px;top:101px" width="12" height="12" viewBox="0 0 12 12"><path d="M6 1 V11 M1 6 H11" stroke="#fff" stroke-width="1.8"/></svg>
<div class="t" style="left:1111.5px;top:104.00px;font-size:11.8px;font-weight:700;color:#ffffff;">Thêm mới</div>
<svg style="position:absolute;left:1173px;top:105px" width="9" height="5" viewBox="0 0 9 5"><path d="M0 0 H9 L4.5 5 Z" fill="#fff"/></svg>
<div style="position:absolute;left:1200px;top:93.3px;width:84px;height:27.7px;background:#008614;border-radius:4px;"></div>
<svg style="position:absolute;left:1211px;top:100px" width="16" height="15" viewBox="0 0 16 15"><path fill="#d1d1d1" d="M5.2 0.7 H11.2 L14.8 4.3 V13.4 C14.8 13.9 14.4 14.2 14 14.2 H6 C5.5 14.2 5.2 13.9 5.2 13.4 Z"/><path d="M11.2 0.7 V4.3 H14.8" fill="none" stroke="#008614" stroke-width="0.9"/><path d="M1 8.3 H5.2" stroke="#d1d1d1" stroke-width="1.4"/><path d="M5.2 8.3 H10" stroke="#008614" stroke-width="1.4"/><path d="M7.6 5.9 L10.1 8.3 L7.6 10.7" fill="none" stroke="#008614" stroke-width="1.4"/></svg>
<div class="t" style="left:1235.5px;top:104.00px;font-size:11.8px;font-weight:700;color:#d1d1d1;">Import</div>
<div style="position:absolute;left:1292.5px;top:93.3px;width:93.5px;height:27.7px;background:#008614;border-radius:4px;"></div>
<svg style="position:absolute;left:1303px;top:100px" width="17" height="15" viewBox="0 0 17 15"><path fill="#d1d1d1" d="M1.8 0.7 H7.8 L10.8 3.7 V13.4 C10.8 13.9 10.4 14.2 10 14.2 H2.6 C2.1 14.2 1.8 13.9 1.8 13.4 Z"/><path d="M7.8 0.7 V3.7 H10.8" fill="none" stroke="#008614" stroke-width="0.9"/><path d="M6 8.3 H10.8" stroke="#008614" stroke-width="1.4"/><path d="M10.8 8.3 H15" stroke="#d1d1d1" stroke-width="1.4"/><path d="M12.6 5.9 L15.2 8.3 L12.6 10.7" fill="none" stroke="#d1d1d1" stroke-width="1.4"/></svg>
<div class="t" style="left:1327px;top:104.00px;font-size:11.8px;font-weight:700;color:#d1d1d1;">Xuất file</div>
<div style="position:absolute;left:1394.3px;top:93.5px;width:47.7px;height:27.2px;background:#008614;border-radius:6px;"></div>
<svg style="position:absolute;left:1405px;top:102px" width="14" height="13" viewBox="0 0 14 13"><g fill="#d1d1d1"><rect x="0" y="0.3" width="6" height="1.8"/><rect x="7.1" y="0.3" width="6.5" height="1.8"/><rect x="0" y="3.8" width="6" height="1.8"/><rect x="7.1" y="3.8" width="6.5" height="1.8"/><rect x="0" y="7" width="6" height="1.8"/><rect x="7.1" y="7" width="6.5" height="1.8"/><rect x="0" y="10.3" width="6" height="1.8"/><rect x="7.1" y="10.3" width="6.5" height="1.8"/></g></svg>
<svg style="position:absolute;left:1427px;top:106px" width="9" height="5" viewBox="0 0 9 5"><path d="M0 0 H9 L4.5 4.5 Z" fill="#d1d1d1"/></svg>
<svg style="position:absolute;left:1317px;top:133px" width="13" height="14" viewBox="0 0 13 14"><path fill="none" stroke="#1f3fcf" stroke-width="1.3" d="M1.2 11.5 V1.7 C1.2 1.2 1.5 0.9 2 0.9 H11.5 V10.5 H2.2 C1.6 10.5 1.2 11 1.2 11.6 C1.2 12.2 1.6 12.7 2.2 12.7 H11.5"/><rect x="3.5" y="3.2" width="5.8" height="1.2" fill="#1f3fcf"/><rect x="3.5" y="5.8" width="5.8" height="1.2" fill="#1f3fcf"/></svg>
<div class="t" style="left:1334.5px;top:134.00px;font-size:12px;font-weight:400;color:#1f3fcf;">Hướng dẫn sử dụng</div>
<div style="position:absolute;left:1082px;top:119px;width:229px;height:137px;background:#d1d1d1;border-radius:6px;box-shadow:0 6px 16px rgba(0,0,0,0.2);"></div>
<div style="position:absolute;left:1082px;top:119px;width:116px;height:5px;background:#ffffff;"></div>
<div style="position:absolute;left:1081px;top:183px;width:230px;height:32px;background:#ffffff;"></div>
<svg style="position:absolute;left:1102.8px;top:136.7px" width="10.2" height="10.2" viewBox="0 0 10.2 10.2"><path d="M5.1 0 V10.2 M0 5.1 H10.2" stroke="#141414" stroke-width="1.4"/></svg>
<div class="t" style="left:1130px;top:137.00px;font-size:12.3px;font-weight:400;color:#141414;">Thêm hàng hóa</div>
<svg style="position:absolute;left:1102.8px;top:166.7px" width="10.2" height="10.2" viewBox="0 0 10.2 10.2"><path d="M5.1 0 V10.2 M0 5.1 H10.2" stroke="#141414" stroke-width="1.4"/></svg>
<div class="t" style="left:1130px;top:167.00px;font-size:12.3px;font-weight:400;color:#141414;">Thêm hàng chế biến</div>
<svg style="position:absolute;left:1102.8px;top:196.7px" width="10.2" height="10.2" viewBox="0 0 10.2 10.2"><path d="M5.1 0 V10.2 M0 5.1 H10.2" stroke="#333333" stroke-width="1.4"/></svg>
<div class="t" style="left:1130px;top:197.00px;font-size:12.3px;font-weight:400;color:#333333;">Thêm dịch vụ</div>
<svg style="position:absolute;left:1102.8px;top:226.7px" width="10.2" height="10.2" viewBox="0 0 10.2 10.2"><path d="M5.1 0 V10.2 M0 5.1 H10.2" stroke="#141414" stroke-width="1.4"/></svg>
<div class="t" style="left:1130px;top:227.00px;font-size:12.3px;font-weight:400;color:#141414;">Thêm Combo, Buffet gọi món</div>
<div style="position:absolute;left:1514px;top:729px;width:72px;height:27px;background:#0040c4;border-radius:6px;"></div>
<svg style="position:absolute;left:1522px;top:736px" width="15" height="13" viewBox="0 0 15 13"><path d="M7.5 0.5 C11.4 0.5 14.5 2.9 14.5 5.8 C14.5 8.7 11.4 11.1 7.5 11.1 C6.7 11.1 5.9 11 5.2 10.8 L1.5 12.5 L2.6 9.5 C1.3 8.5 0.5 7.2 0.5 5.8 C0.5 2.9 3.6 0.5 7.5 0.5 Z" fill="#d1d1d1"/><circle cx="4.5" cy="5.8" r="1" fill="#0040c4"/><circle cx="7.5" cy="5.8" r="1" fill="#0040c4"/><circle cx="10.5" cy="5.8" r="1" fill="#0040c4"/></svg>
<div class="t" style="left:1541.5px;top:738.00px;font-size:11.5px;font-weight:700;color:#d1d1d1;">Hỗ trợ</div>
<div style="position:absolute;left:1593.3px;top:1.5px;width:8px;height:335px;background:#949494;border-radius:4px;"></div>
</body></html>
